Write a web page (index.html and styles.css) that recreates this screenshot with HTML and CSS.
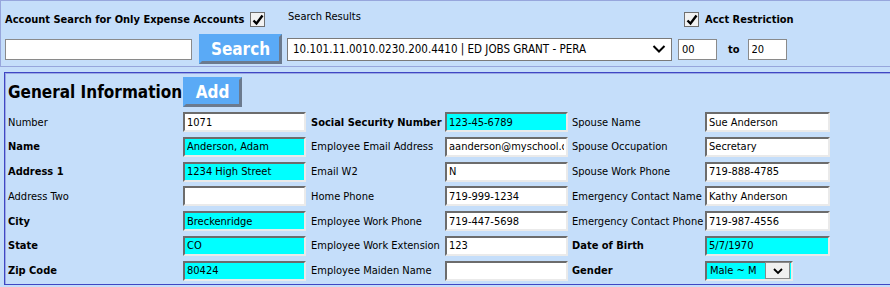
FILE: index.html
```html
<!DOCTYPE html>
<html lang="en">

<head>
    <meta charset="UTF-8">
    <title>Employee - General Information</title>
    <link rel="stylesheet" href="styles.css">
</head>

<body>
    <!-- Account search bar -->
    <div class="search-panel">
        <div class="search-cell">
            <span class="strong">Account Search for Only Expense Accounts</span>
            <span class="check"><svg width="12" height="12" viewBox="0 0 12 12"><path d="M1.5 6.5 L4.5 9.5 L10.5 1.5" fill="none" stroke="#000" stroke-width="2.4"/></svg></span>
        </div>
        <div class="search-cell results-label">Search Results</div>
        <div class="search-cell restrict">
            <span class="check"><svg width="12" height="12" viewBox="0 0 12 12"><path d="M1.5 6.5 L4.5 9.5 L10.5 1.5" fill="none" stroke="#000" stroke-width="2.4"/></svg></span>
            <span class="strong">Acct Restriction</span>
        </div>

        <div class="search-cell">
            <input type="text" class="search-input" value="">
            <button class="blue-btn search-btn">Search</button>
        </div>
        <div class="search-cell">
            <div class="fake-select">
                <span>10.101.11.0010.0230.200.4410 | ED JOBS GRANT - PERA</span>
                <svg width="14" height="10" viewBox="0 0 14 10"><path d="M1.5 2 L7 7.5 L12.5 2" fill="none" stroke="#000" stroke-width="2"/></svg>
            </div>
        </div>
        <div class="search-cell">
            <input type="text" class="range-input" value="00">
            <span class="strong to">to</span>
            <input type="text" class="range-input" value="20">
        </div>
    </div>

    <!-- General information -->
    <div class="info-panel">
        <div class="info-head">
            <h2>General Information</h2>
            <button class="blue-btn add-btn">Add</button>
        </div>
        <div class="info-grid">
            <label>Number</label>
            <input type="text" value="1071">
            <label class="strong">Social Security Number</label>
            <input type="text" class="req" value="123-45-6789">
            <label>Spouse Name</label>
            <input type="text" class="wide" value="Sue Anderson">

            <label class="strong">Name</label>
            <input type="text" class="req" value="Anderson, Adam">
            <label>Employee Email Address</label>
            <input type="text" value="aanderson@myschool.com">
            <label>Spouse Occupation</label>
            <input type="text" class="wide" value="Secretary">

            <label class="strong">Address 1</label>
            <input type="text" class="req" value="1234 High Street">
            <label>Email W2</label>
            <input type="text" value="N">
            <label>Spouse Work Phone</label>
            <input type="text" class="wide" value="719-888-4785">

            <label>Address Two</label>
            <input type="text" value="">
            <label>Home Phone</label>
            <input type="text" value="719-999-1234">
            <label>Emergency Contact Name</label>
            <input type="text" class="wide" value="Kathy Anderson">

            <label class="strong">City</label>
            <input type="text" class="req" value="Breckenridge">
            <label>Employee Work Phone</label>
            <input type="text" value="719-447-5698">
            <label>Emergency Contact Phone</label>
            <input type="text" class="wide" value="719-987-4556">

            <label class="strong">State</label>
            <input type="text" class="req" value="CO">
            <label>Employee Work Extension</label>
            <input type="text" value="123">
            <label class="strong">Date of Birth</label>
            <input type="text" class="req wide" value="5/7/1970">

            <label class="strong">Zip Code</label>
            <input type="text" class="req" value="80424">
            <label>Employee Maiden Name</label>
            <input type="text" value="">
            <label class="strong">Gender</label>
            <div class="gender-select">
                <span class="gender-value">Male ~ M</span>
                <span class="gender-arrow"><svg width="12" height="8" viewBox="0 0 12 8"><path d="M2 2 L6 6 L10 2" fill="none" stroke="#000" stroke-width="1.8"/></svg></span>
            </div>
        </div>
    </div>
</body>

</html>
```

FILE: styles.css
```css
body {
    margin: 0;
    background-color: #c5defa;
    font-family: Tahoma, "DejaVu Sans Condensed", "DejaVu Sans", sans-serif;
    font-size: 11px;
    color: #000;
}

.strong {
    font-weight: bold;
}

/* top search bar */
.search-panel {
    display: grid;
    grid-template-columns: 282px 391px 212px;
    grid-template-rows: 33px 30px;
    height: 67px;
    box-sizing: border-box;
    border: 1px solid #97a6dc;
    border-right: none;
    padding: 0 0 0 4px;
}

.search-cell {
    display: flex;
    align-items: center;
}

.search-cell:nth-child(1) {
    padding-top: 4px;
}

.results-label {
    padding-left: 1px;
    align-items: flex-start;
    padding-top: 9px;
}

.restrict {
    padding-left: 6px;
    padding-top: 4px;
}

.check {
    display: inline-flex;
    align-items: center;
    justify-content: center;
    width: 13px;
    height: 13px;
    margin-left: 6px;
    border: 1px solid #6f6f6f;
    background-color: #f2f2f2;
}

.restrict .check {
    margin-left: 0;
    margin-right: 6px;
}

.search-input {
    width: 187px;
    height: 21px;
    box-sizing: border-box;
    border: 1px solid #8a8a8a;
    margin-right: 7px;
}

.blue-btn {
    font-family: Tahoma, "DejaVu Sans Condensed", "DejaVu Sans", sans-serif;
    font-weight: bold;
    color: #fff;
    background-color: #5aaaf6;
    border: 3px solid;
    border-color: #5aaaf6 #6b7a8e #6b7a8e #5aaaf6;
    padding: 0;
    cursor: pointer;
}

.search-btn {
    width: 83px;
    height: 30px;
    font-size: 17px;
}

.fake-select {
    display: flex;
    align-items: center;
    justify-content: space-between;
    width: 385px;
    height: 23px;
    box-sizing: border-box;
    padding: 0 5px 0 5px;
    background-color: #fff;
    border: 1px solid #7a7a7a;
    font-size: 11.5px;
}

.range-input {
    width: 39px;
    height: 21px;
    box-sizing: border-box;
    border: 1px solid #8a8a8a;
    padding: 0 3px;
    font-family: inherit;
    font-size: 11px;
}

.to {
    margin: 0 8px 0 11px;
}

/* general information panel */
.info-panel {
    margin: 5px 0 0 4px;
    height: 213px;
    box-sizing: border-box;
    border: 1px solid #3f47c4;
    border-right: none;
    box-shadow: inset 1px 1px 0 #9aa8e4;
    padding: 4px 0 0 3px;
}

.info-head {
    display: flex;
    align-items: center;
    margin-bottom: 5px;
}

.info-head h2 {
    margin: 0;
    width: 175px;
    font-size: 17px;
    white-space: nowrap;
}

.add-btn {
    width: 59px;
    height: 30px;
    font-size: 17px;
}

.info-grid {
    display: grid;
    grid-template-columns: 175px 128px 134px 127px 133px 125px;
    grid-auto-rows: 20px;
    row-gap: 4.75px;
    align-items: center;
}

.info-grid input {
    width: 123px;
    height: 20px;
    box-sizing: border-box;
    border: 2px solid;
    border-color: #6c6c6c #eaeaea #eaeaea #6c6c6c;
    padding: 0 2px;
    font-family: inherit;
    font-size: 11px;
    background-color: #fff;
}

.info-grid input.wide {
    width: 125px;
}

.info-grid input.req {
    background-color: #00ffff;
}

.gender-select {
    display: flex;
    align-items: center;
    width: 88px;
    height: 20px;
    box-sizing: border-box;
    border: 2px solid;
    border-color: #6c6c6c #eaeaea #eaeaea #6c6c6c;
    background-color: #00ffff;
    font-size: 11px;
}

.gender-value {
    flex: 1;
    padding-left: 3px;
}

.gender-arrow {
    display: flex;
    align-items: center;
    justify-content: center;
    width: 23px;
    height: 15px;
    margin-right: 1px;
    background-color: #f0f0f0;
    border: 1px solid #8a8a8a;
}
```
